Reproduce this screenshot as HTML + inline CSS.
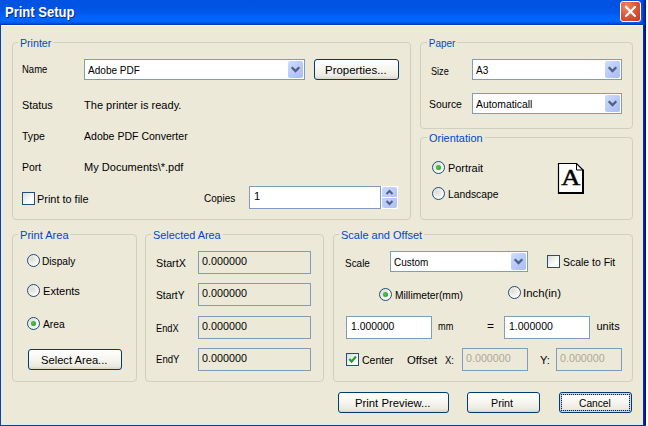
<!DOCTYPE html>
<html><head><meta charset="utf-8"><title>Print Setup</title>
<style>
html,body{margin:0;padding:0;}
body{width:648px;height:426px;overflow:hidden;background:#fff;font-family:"Liberation Sans","DejaVu Sans",sans-serif;font-size:11px;color:#000;position:relative;}
#win{position:absolute;left:0;top:0;width:646px;height:426px;background:#ece9d8;overflow:hidden;}
#tb{position:absolute;left:0;top:0;width:646px;height:25px;background:linear-gradient(#0053e1 0%,#0054e3 30%,#0058ec 50%,#0063fb 70%,#0066ff 84%,#0058e6 92%,#0040b8 97%,#00309a 100%);}
#tbl{position:absolute;left:1px;top:25px;width:642px;height:1px;background:#fafbfc;}
#title{position:absolute;left:5px;top:5px;font-size:14px;transform:scaleX(0.93);transform-origin:0 0;font-weight:bold;color:#fff;text-shadow:1px 1px 0 #0a2a8a;white-space:nowrap;line-height:15px;}
#lb{position:absolute;left:0;top:25px;width:1px;height:401px;background:#1a4190;}
#lb2{position:absolute;left:1px;top:26px;width:1px;height:399px;background:#d9eeff;}
#lb3{position:absolute;left:2px;top:26px;width:1px;height:398px;background:#e8ebe4;}
#rb{position:absolute;left:643px;top:0;width:3px;height:426px;background:linear-gradient(90deg,#12309f,#071f8f 50%,#000e78);}
#rbt{position:absolute;left:642px;top:0;width:4px;height:25px;background:linear-gradient(90deg,#0a4fe0,#0838c4 40%,#0528a8 70%,#001a90);}
#rb2{position:absolute;left:642px;top:26px;width:1px;height:399px;background:#e2edff;}
#bb{position:absolute;left:0;top:425px;width:646px;height:1px;background:#173b8c;}
#bb2{position:absolute;left:1px;top:424px;width:642px;height:1px;background:#d9ecff;}
#close{position:absolute;left:620px;top:1px;width:19px;height:19px;border:1px solid #fff;border-radius:3px;background:radial-gradient(circle at 30% 25%,#ef8a6a 0%,#e0573a 45%,#c8371c 100%);}
.gb{position:absolute;border:1px solid #d0d0bf;border-radius:4px;box-sizing:border-box;}
.gl{position:absolute;color:#0046d5;background:#ece9d8;padding:0 2px;white-space:nowrap;line-height:13px;}
.t{position:absolute;white-space:nowrap;line-height:13px;}
.cb{position:absolute;box-sizing:border-box;border:1px solid #7f9db9;background:#fff;height:21px;}
.cb .v{position:absolute;top:4px;line-height:13px;white-space:nowrap;}
.cb .d{position:absolute;right:1px;top:1px;width:15px;height:17px;border-radius:2px;background:linear-gradient(135deg,#cfdcfd,#b5c8f7 60%,#a9bdf2);box-sizing:border-box;}
.cb .d svg{position:absolute;left:0;top:0;}
.ed{position:absolute;box-sizing:border-box;border:1px solid #7f9db9;background:#fff;}
.ed span{position:absolute;top:3px;line-height:13px;white-space:nowrap;}
.ro{background:#ece9d8;}
.dis span{color:#aca899;}
.btn{position:absolute;box-sizing:border-box;height:21px;border:1px solid #003c74;border-radius:3px;background:linear-gradient(#ffffff 0%,#f6f5ef 50%,#eceadf 85%,#d9d5c6 100%);white-space:nowrap;}
.btn span{position:absolute;top:4px;line-height:13px;white-space:nowrap;}
.btn.def{box-shadow:inset 0 0 0 1px #cbd9f5, inset 0 0 0 2px #a9c1ee;}
.foc{position:absolute;left:1px;top:1px;right:1px;bottom:1px;border:1px dotted #222;}
.spin{position:absolute;width:17px;height:23px;background:#fff;}
.su{position:absolute;left:1px;top:1px;width:15px;height:10px;background:linear-gradient(135deg,#c9d7fc,#b4c6f5);border-radius:2px 2px 0 0;overflow:hidden;}
.sd{position:absolute;left:1px;top:12px;width:15px;height:10px;background:linear-gradient(135deg,#c3d2fa,#aec1f2);border-radius:0 0 2px 2px;overflow:hidden;}
.su svg,.sd svg{position:absolute;left:0;top:0;}
.rd{position:absolute;width:11px;height:11px;border:1px solid #1d4a78;border-radius:50%;background:radial-gradient(circle at 35% 35%,#dcdcd3,#fdfdfb 70%);}
.rd.on:after{content:"";position:absolute;left:3px;top:3px;width:5px;height:5px;border-radius:50%;background:radial-gradient(circle at 40% 40%,#4fc84b,#1f981f);}
.ck{position:absolute;width:11px;height:11px;border:1px solid #1c5180;background:linear-gradient(135deg,#dcdcd3,#fff 70%);}
</style></head><body>
<div id="win">
<div id="tb"></div><div id="tbl"></div>
<div id="title">Print Setup</div>
<div id="close"><svg width="19" height="19" viewBox="0 0 19 19" style="position:absolute;left:0;top:0"><path d="M5 5 L14 14 M14 5 L5 14" stroke="#fff" stroke-width="2.2" stroke-linecap="round" fill="none"/></svg></div>
<div id="lb"></div><div id="lb2"></div><div id="lb3"></div><div id="rb2"></div><div id="bb2"></div><div id="rb"></div><div id="rbt"></div><div id="bb"></div>
<div class="gb" style="left:12px;top:42px;width:399px;height:178px;"></div>
<div class="gb" style="left:420px;top:42px;width:213px;height:87px;"></div>
<div class="gb" style="left:420px;top:137px;width:213px;height:83px;"></div>
<div class="gb" style="left:12px;top:234px;width:125px;height:148px;"></div>
<div class="gb" style="left:145px;top:234px;width:179px;height:148px;"></div>
<div class="gb" style="left:333px;top:234px;width:300px;height:148px;"></div>
<div class="cb" style="left:84px;top:59px;width:221px;"><span class="v" id="v_adobe" style="left:2.50px;transform:scaleX(0.9142);transform-origin:0 0;">Adobe PDF</span><div class="d"><svg width="15" height="17" viewBox="0 0 15 17"><path d="M3.7 6.3 L7.5 10.1 L11.3 6.3" stroke="#4d6185" stroke-width="2.3" fill="none"/></svg></div></div>
<div class="cb" style="left:472px;top:59px;width:150px;"><span class="v" id="v_a3" style="left:3.40px;transform:scaleX(0.9152);transform-origin:0 0;">A3</span><div class="d"><svg width="15" height="17" viewBox="0 0 15 17"><path d="M3.7 6.3 L7.5 10.1 L11.3 6.3" stroke="#4d6185" stroke-width="2.3" fill="none"/></svg></div></div>
<div class="cb" style="left:472px;top:93px;width:150px;"><span class="v" id="v_auto" style="left:3.40px;transform:scaleX(0.9411);transform-origin:0 0;">Automaticall</span><div class="d"><svg width="15" height="17" viewBox="0 0 15 17"><path d="M3.7 6.3 L7.5 10.1 L11.3 6.3" stroke="#4d6185" stroke-width="2.3" fill="none"/></svg></div></div>
<div class="cb" style="left:390px;top:251px;width:138px;"><span class="v" id="v_custom" style="left:3.40px;transform:scaleX(0.9054);transform-origin:0 0;">Custom</span><div class="d"><svg width="15" height="17" viewBox="0 0 15 17"><path d="M3.7 6.3 L7.5 10.1 L11.3 6.3" stroke="#4d6185" stroke-width="2.3" fill="none"/></svg></div></div>
<div class="ed " style="left:249px;top:186px;width:132px;height:23px;"><span id="e_copies" style="left:3.90px;transform:scaleX(1.0000);transform-origin:0 0;">1</span></div>
<div class="ed ro" style="left:198px;top:251px;width:113px;height:23px;"><span id="e_sx" style="left:2.50px;transform:scaleX(0.9783);transform-origin:0 0;">0.000000</span></div>
<div class="ed ro" style="left:198px;top:283px;width:113px;height:23px;"><span id="e_sy" style="left:2.50px;transform:scaleX(0.9783);transform-origin:0 0;">0.000000</span></div>
<div class="ed ro" style="left:198px;top:316px;width:113px;height:23px;"><span id="e_ex" style="left:2.50px;transform:scaleX(0.9783);transform-origin:0 0;">0.000000</span></div>
<div class="ed ro" style="left:198px;top:348px;width:113px;height:23px;"><span id="e_ey" style="left:2.50px;transform:scaleX(0.9783);transform-origin:0 0;">0.000000</span></div>
<div class="ed " style="left:346px;top:316px;width:86px;height:23px;"><span id="e_m1" style="left:4.40px;transform:scaleX(0.9435);transform-origin:0 0;">1.000000</span></div>
<div class="ed " style="left:504px;top:316px;width:86px;height:23px;"><span id="e_m2" style="left:3.60px;transform:scaleX(0.9561);transform-origin:0 0;">1.000000</span></div>
<div class="ed ro dis" style="left:462px;top:348px;width:66px;height:23px;"><span id="e_ox" style="left:3.40px;transform:scaleX(0.9735);transform-origin:0 0;">0.000000</span></div>
<div class="ed ro dis" style="left:556px;top:348px;width:66px;height:23px;"><span id="e_oy" style="left:3.40px;transform:scaleX(0.9735);transform-origin:0 0;">0.000000</span></div>
<div class="btn " style="left:314px;top:59px;width:85px;"><span id="b_prop" style="left:10.40px;transform:scaleX(1.0408);transform-origin:0 0;">Properties...</span></div>
<div class="btn " style="left:28px;top:349px;width:94px;"><span id="b_sel" style="left:11.60px;transform:scaleX(1.0154);transform-origin:0 0;">Select Area...</span></div>
<div class="btn " style="left:338px;top:392px;width:111px;"><span id="b_pp" style="left:15.50px;transform:scaleX(1.0280);transform-origin:0 0;">Print Preview...</span></div>
<div class="btn " style="left:467px;top:392px;width:73px;"><span id="b_print" style="left:23.40px;transform:scaleX(0.9741);transform-origin:0 0;">Print</span></div>
<div class="btn def" style="left:559px;top:392px;width:73px;"><i class="foc"></i><span id="b_cancel" style="left:18.90px;transform:scaleX(0.9290);transform-origin:0 0;">Cancel</span></div>
<div class="rd on" style="left:432px;top:161px;"></div>
<div class="rd" style="left:432px;top:187px;"></div>
<div class="rd" style="left:27px;top:254px;"></div>
<div class="rd" style="left:27px;top:284px;"></div>
<div class="rd on" style="left:27px;top:317px;"></div>
<div class="rd on" style="left:379px;top:288px;"></div>
<div class="rd" style="left:508px;top:286px;"></div>
<div class="ck" style="left:22px;top:192px;"></div>
<div class="ck" style="left:547px;top:255px;"></div>
<div class="ck" style="left:346px;top:353px;"><svg width="11" height="11" viewBox="0 0 11 11" style="position:absolute;left:0;top:0"><path d="M2.3 5 L4.6 7.6 L9 2.6" stroke="#21a121" stroke-width="2.2" fill="none"/></svg></div>
<div class="spin" style="left:381px;top:186px;"><div class="su"><svg width="15" height="10" viewBox="0 0 15 10"><path d="M4.5 7 L7.5 4 L10.5 7" stroke="#4d6185" stroke-width="2" fill="none"/></svg></div><div class="sd"><svg width="15" height="10" viewBox="0 0 15 10"><path d="M4.5 3 L7.5 6 L10.5 3" stroke="#4d6185" stroke-width="2" fill="none"/></svg></div></div>
<svg class="pg" style="position:absolute;left:556px;top:161px;" width="32" height="36" viewBox="0 0 32 36"><path d="M2.5 2.5 H20.5 L27 9 V32 H2.5 Z" fill="#fff" stroke="none"/><path d="M2.5 33 V2.5 H20.5 L27 9" fill="none" stroke="#000" stroke-width="1.2"/><path d="M20.5 2.5 V9 H27" fill="none" stroke="#000" stroke-width="1"/><path d="M27 8.5 V32 H2" fill="none" stroke="#000" stroke-width="2"/><text x="14.8" y="24.4" text-anchor="middle" font-family="Liberation Serif, serif" font-size="24" transform="translate(14.8 0) scale(1.1 1) translate(-14.8 0)" fill="#000" stroke="#000" stroke-width="0.5">A</text></svg>
<div class="gl" id="printer" style="left:17.50px;top:37px;transform:scaleX(0.9688);transform-origin:0 0;">Printer</div>
<div class="t" id="name" style="left:21.50px;top:63px;transform:scaleX(0.8624);transform-origin:0 0;">Name</div>
<div class="t" id="status" style="left:21.50px;top:99px;transform:scaleX(0.9872);transform-origin:0 0;">Status</div>
<div class="t" id="statusv" style="left:83.50px;top:99px;transform:scaleX(1.0042);transform-origin:0 0;">The printer is ready.</div>
<div class="t" id="type" style="left:21.50px;top:130px;transform:scaleX(0.9583);transform-origin:0 0;">Type</div>
<div class="t" id="typev" style="left:83.50px;top:130px;transform:scaleX(0.9579);transform-origin:0 0;">Adobe PDF Converter</div>
<div class="t" id="port" style="left:21.50px;top:161px;transform:scaleX(0.9500);transform-origin:0 0;">Port</div>
<div class="t" id="portv" style="left:83.50px;top:161px;transform:scaleX(1.0041);transform-origin:0 0;">My Documents\*.pdf</div>
<div class="t" id="ptf" style="left:37.00px;top:193px;transform:scaleX(0.9924);transform-origin:0 0;">Print to file</div>
<div class="t" id="copies" style="left:203.50px;top:192px;transform:scaleX(0.9118);transform-origin:0 0;">Copies</div>
<div class="gl" id="paper" style="left:426.60px;top:37px;transform:scaleX(0.9036);transform-origin:0 0;">Paper</div>
<div class="t" id="size" style="left:431.00px;top:65px;transform:scaleX(0.8302);transform-origin:0 0;">Size</div>
<div class="t" id="source" style="left:429.00px;top:98px;transform:scaleX(0.9431);transform-origin:0 0;">Source</div>
<div class="gl" id="orient" style="left:426.60px;top:132px;transform:scaleX(0.9963);transform-origin:0 0;">Orientation</div>
<div class="t" id="portrait" style="left:447.60px;top:162px;transform:scaleX(0.9897);transform-origin:0 0;">Portrait</div>
<div class="t" id="landscape" style="left:447.60px;top:188px;transform:scaleX(0.9361);transform-origin:0 0;">Landscape</div>
<div class="gl" id="parea" style="left:17.60px;top:229px;transform:scaleX(1.0044);transform-origin:0 0;">Print Area</div>
<div class="t" id="dispaly" style="left:42.00px;top:255px;transform:scaleX(0.9222);transform-origin:0 0;">Dispaly</div>
<div class="t" id="extents" style="left:42.60px;top:285px;transform:scaleX(1.0057);transform-origin:0 0;">Extents</div>
<div class="t" id="area" style="left:43.40px;top:318px;transform:scaleX(0.9343);transform-origin:0 0;">Area</div>
<div class="gl" id="selarea" style="left:150.60px;top:229px;transform:scaleX(0.9883);transform-origin:0 0;">Selected Area</div>
<div class="t" id="startx" style="left:155.90px;top:257px;transform:scaleX(0.9746);transform-origin:0 0;">StartX</div>
<div class="t" id="starty" style="left:155.90px;top:289px;transform:scaleX(0.9355);transform-origin:0 0;">StartY</div>
<div class="t" id="endx" style="left:155.90px;top:322px;transform:scaleX(0.8404);transform-origin:0 0;">EndX</div>
<div class="t" id="endy" style="left:155.60px;top:353px;transform:scaleX(0.8701);transform-origin:0 0;">EndY</div>
<div class="gl" id="sao" style="left:338.60px;top:229px;transform:scaleX(1.0002);transform-origin:0 0;">Scale and Offset</div>
<div class="t" id="scale" style="left:345.40px;top:257px;transform:scaleX(0.9038);transform-origin:0 0;">Scale</div>
<div class="t" id="stf" style="left:562.60px;top:256px;transform:scaleX(0.9501);transform-origin:0 0;">Scale to Fit</div>
<div class="t" id="mm1" style="left:394.60px;top:289px;transform:scaleX(0.9334);transform-origin:0 0;">Millimeter(mm)</div>
<div class="t" id="inch" style="left:522.60px;top:287px;transform:scaleX(1.0336);transform-origin:0 0;">Inch(in)</div>
<div class="t" id="mm" style="left:437.50px;top:320px;transform:scaleX(0.8342);transform-origin:0 0;">mm</div>
<div class="t" id="eq" style="left:486.50px;top:320px;transform:scaleX(1.0950);transform-origin:0 0;">=</div>
<div class="t" id="units" style="left:596.40px;top:320px;transform:scaleX(1.0000);transform-origin:0 0;">units</div>
<div class="t" id="center" style="left:361.60px;top:354px;transform:scaleX(0.9580);transform-origin:0 0;">Center</div>
<div class="t" id="offset" style="left:407.40px;top:354px;transform:scaleX(1.0356);transform-origin:0 0;">Offset</div>
<div class="t" id="xc" style="left:444.60px;top:354px;transform:scaleX(0.8604);transform-origin:0 0;">X:</div>
<div class="t" id="yc" style="left:539.60px;top:354px;transform:scaleX(1.0125);transform-origin:0 0;">Y:</div>
</div>
</body></html>
